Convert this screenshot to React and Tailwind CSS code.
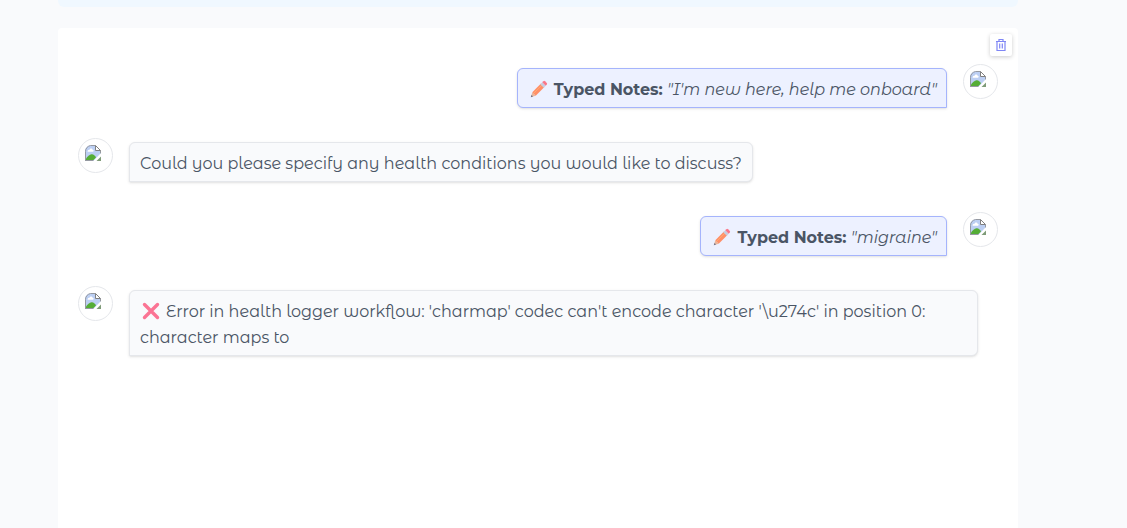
function BrokenImage() {
  return (
    <svg width="16" height="16" viewBox="0 0 16 16" aria-hidden="true">
      <path d="M0 16V6C0 3 2.500 0.500 5.500 0.500H10L15.500 6V8.500L8.500 16Z" fill="#bccff3" />
      <path d="M2.500 6.500C2.500 5 4 4.700 4.600 4.700C5 3 7.200 3 7.600 4.800C9 4.800 9 6.700 8 6.700H3Z" fill="#fff" />
      <path d="M1 15V13.500C2.500 11.500 4.500 9.500 6.500 9.200C8.500 9 10 10.500 11 12.500L8.500 15Z" fill="#55ad36" />
      <path d="M0.500 16V6.500C0.500 3.500 2.500 1.200 5.500 0.500H10.500M0 15.500H8.500M15.500 5.500V8.500" fill="none" stroke="#9599a1" />
      <path d="M10.500 0.500V5.500H15.500Z" fill="#fff" stroke="#808080" />
      <path d="M8.500 16L16 8.500V11.500L11.500 16Z" fill="#fff" />
      <path d="M11.500 16L16 11.500V16Z" fill="#7f9b78" />
    </svg>
  );
}

function Avatar({ label }) {
  return (
    <div
      role="img"
      aria-label={label}
      className="h-[35px] w-[35px] shrink-0 rounded-full border border-gray-200 bg-white p-1.5"
    >
      <BrokenImage />
    </div>
  );
}

function Pencil() {
  return (
    <svg className="mr-1.5 ml-[3px] inline-block align-[-3px]" width="18" height="18" viewBox="0 0 18 18" aria-hidden="true">
      <path d="M0.800 17.200L2.300 12.300L5.700 15.700Z" fill="#e8b69c" />
      <path d="M0.800 17.200L1.500 15L3 16.500Z" fill="#66708a" />
      <path d="M2.300 12.300L11 3.600L14.400 7L5.700 15.700Z" fill="#ff8f68" />
      <path d="M3.500 13.500L12.200 4.800" stroke="#ffaa70" strokeWidth="1" />
      <path d="M10.300 4.300L12.300 2.300L15.700 5.700L13.700 7.700Z" fill="#c5cce0" />
      <path d="M12.300 2.300L13.400 1.200Q14.200 0.500 15 1.200L16.800 3Q17.500 3.800 16.800 4.600L15.700 5.700Z" fill="#fa7688" />
    </svg>
  );
}

function Cross() {
  return (
    <svg className="mr-1.5 ml-0.5 inline-block align-[-3px]" width="18" height="18" viewBox="0 0 18 18" aria-hidden="true">
      <path d="M2.500 2.500L15.500 15.500M15.500 2.500L2.500 15.500" stroke="#fb7494" strokeWidth="3.400" strokeLinecap="round" />
    </svg>
  );
}

function UserMessage({ note }) {
  return (
    <li className="flex items-start justify-end gap-4">
      <p className="mt-1 rounded-md rounded-br-none border border-[#a5b4fc] bg-[#edf1ff] px-[9px] pt-2 pb-1 shadow-sm">
        <Pencil />
        <strong className="font-[Montserrat,sans-serif] font-bold">Typed Notes:</strong> <em>"{note}"</em>
      </p>
      <Avatar label="User" />
    </li>
  );
}

function BotMessage({ children }) {
  return (
    <li className="mr-5 flex items-start gap-4">
      <Avatar label="Assistant" />
      <p className="mt-1 rounded-md rounded-bl-none border border-gray-200 bg-[#f9fafc] px-2.5 pt-2 pb-1 shadow-sm">
        {children}
      </p>
    </li>
  );
}

export default function App() {
  return (
    <div className="flex min-h-screen flex-col bg-[#f9fafc] pr-[109px] pl-[58px] font-['Montserrat_Alternates',Montserrat,Inter,sans-serif] text-base leading-[26px] text-gray-600">
      <div className="h-[7px] rounded-b-md bg-[#f0f8ff]" />
      <main className="relative mt-[21px] grow rounded-t-sm bg-white px-5 pt-9">
        <button
          type="button"
          aria-label="Clear chat"
          className="absolute top-1.5 right-1.5 flex h-[22px] w-[22px] items-center justify-center rounded-xs bg-white text-[#7f86f5] shadow-[0_1px_4px_rgba(0,0,0,0.2)]"
        >
          <svg width="12" height="14" viewBox="0 0 12 14" fill="none" stroke="currentColor" aria-hidden="true">
            <path d="M1 3.500H11M4 3V1.500H8V3M2 3.500V12.500H10V3.500M4.700 5.500V10.500M7.300 5.500V10.500" strokeWidth="1.200" />
          </svg>
        </button>
        <ul className="flex flex-col gap-[30px]">
          <UserMessage note="I'm new here, help me onboard" />
          <BotMessage>Could you please specify any health conditions you would like to discuss?</BotMessage>
          <UserMessage note="migraine" />
          <BotMessage>
            <Cross />
            {"Error in health logger workflow: 'charmap' codec can't encode character '\\u274c' in position 0: character maps to"}
          </BotMessage>
        </ul>
      </main>
    </div>
  );
}
